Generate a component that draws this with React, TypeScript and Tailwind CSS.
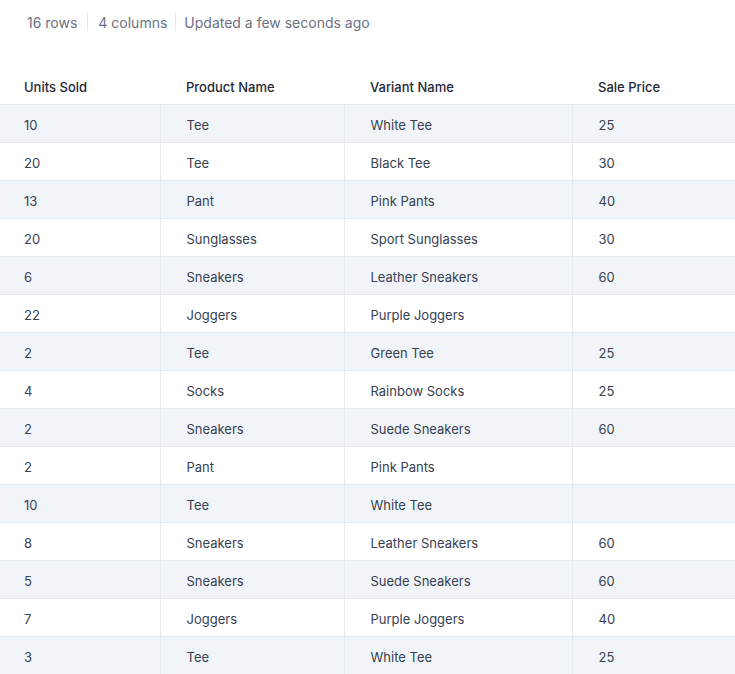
const columns = ['Units Sold', 'Product Name', 'Variant Name', 'Sale Price'];

// only the rows that fit in the viewport
const rows: [string, string, string, string][] = [
  ['10', 'Tee', 'White Tee', '25'],
  ['20', 'Tee', 'Black Tee', '30'],
  ['13', 'Pant', 'Pink Pants', '40'],
  ['20', 'Sunglasses', 'Sport Sunglasses', '30'],
  ['6', 'Sneakers', 'Leather Sneakers', '60'],
  ['22', 'Joggers', 'Purple Joggers', ''],
  ['2', 'Tee', 'Green Tee', '25'],
  ['4', 'Socks', 'Rainbow Socks', '25'],
  ['2', 'Sneakers', 'Suede Sneakers', '60'],
  ['2', 'Pant', 'Pink Pants', ''],
  ['10', 'Tee', 'White Tee', ''],
  ['8', 'Sneakers', 'Leather Sneakers', '60'],
  ['5', 'Sneakers', 'Suede Sneakers', '60'],
  ['7', 'Joggers', 'Purple Joggers', '40'],
  ['3', 'Tee', 'White Tee', '25'],
];

const widths = ['w-[160px]', 'w-[184px]', 'w-[228px]', 'w-[200px]'];

export default function App() {
  return (
    <div
      className="h-[674px] w-[735px] overflow-hidden bg-white"
      style={{ fontFamily: 'Inter, "Noto Sans", sans-serif' }}
    >
      <div className="flex h-[44px] items-center pl-[27px] text-[14px] text-[#6b7280]">
        <span>16 rows</span>
        <span className="mx-[10px] h-[18px] w-px bg-[#e5e7eb]" />
        <span>4 columns</span>
        <span className="mx-[8px] h-[18px] w-px bg-[#e5e7eb]" />
        <span>Updated a few seconds ago</span>
      </div>

      <table className="mt-[24px] w-[772px] table-fixed border-collapse text-[13px]">
        <thead>
          <tr className="h-[36px] border-b border-[#e3e8ef]">
            {columns.map((c, i) => (
              <th
                key={c}
                className={`${widths[i]} ${i === 0 ? 'pl-[24px]' : 'pl-[26px]'} pt-[3px] text-left font-medium text-[#1f2937]`}
              >
                {c}
              </th>
            ))}
          </tr>
        </thead>
        <tbody>
          {rows.map((r, ri) => (
            <tr
              key={ri}
              className={`h-[38px] border-b border-[#e6ebf1] ${ri % 2 === 0 ? 'bg-[#f1f5f9]' : 'bg-white'}`}
            >
              {r.map((cell, ci) => (
                <td
                  key={ci}
                  className={`${ci === 0 ? 'pl-[24px]' : 'pl-[26px] border-l border-[#e6ebf1]'} pt-[6px] text-[#374151]`}
                >
                  {cell}
                </td>
              ))}
            </tr>
          ))}
        </tbody>
      </table>
    </div>
  );
}
